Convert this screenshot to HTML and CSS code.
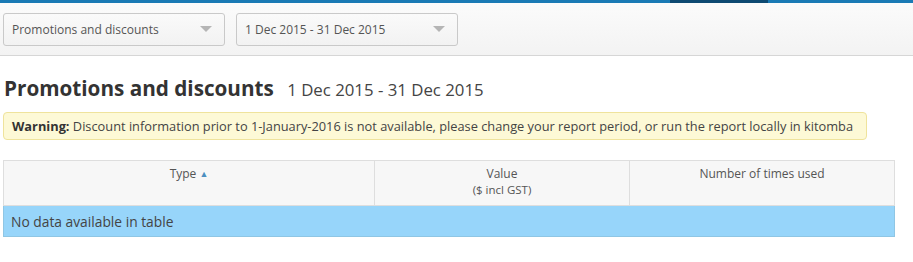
FILE: index.html
```html
<!DOCTYPE html>
<html lang="en">

<head>
    <meta charset="utf-8">
    <meta name="viewport" content="width=device-width, initial-scale=1.0">
    <title>Promotions and discounts</title>
    <link rel="stylesheet" href="styles.css">
</head>

<body>
    <div class="topbar">
        <span class="topbar-active"></span>
    </div>
    <div class="toolbar">
        <div class="select">
            <span>Promotions and discounts</span>
            <span class="caret"></span>
        </div>
        <div class="select">
            <span>1 Dec 2015 - 31 Dec 2015</span>
            <span class="caret"></span>
        </div>
    </div>

    <main>
        <h1>Promotions and discounts <small>1 Dec 2015 - 31 Dec 2015</small></h1>
        <div class="warning">
            <b>Warning:</b> Discount information prior to 1-January-2016 is not available, please change your report period, or run the report locally in kitomba
        </div>

        <table>
            <thead>
                <tr>
                    <th class="col-type">Type <span class="sort">&#9650;</span></th>
                    <th class="col-value">Value<br><span class="sub">($ incl GST)</span></th>
                    <th>Number of times used</th>
                </tr>
            </thead>
            <tbody>
                <tr class="empty">
                    <td colspan="3">No data available in table</td>
                </tr>
            </tbody>
        </table>
    </main>
</body></html>
```

FILE: styles.css
```css
body {
    margin: 0;
    font-family: "Open Sans", "Liberation Sans", sans-serif;
    color: #444;
    background: #fff;
}

.topbar {
    height: 3px;
    background: #1a7ab5;
    display: flex;
}

.topbar-active {
    width: 98px;
    margin-left: 670px;
    background: #0e4a72;
}

.toolbar {
    height: 53px;
    box-sizing: border-box;
    padding: 10px 3px 0;
    display: flex;
    gap: 11px;
    background: linear-gradient(#fbfbfb, #f3f3f3);
    border-bottom: 1px solid #d6d6d6;
}

.select {
    width: 222px;
    height: 33px;
    box-sizing: border-box;
    padding: 0 12px 0 8px;
    display: flex;
    align-items: center;
    justify-content: space-between;
    border: 1px solid #c9c9c9;
    border-radius: 3px;
    background: linear-gradient(#fafafa, #f2f2f2);
    font-size: 12px;
    color: #555;
}

.caret {
    width: 0;
    height: 0;
    border-left: 6px solid transparent;
    border-right: 6px solid transparent;
    border-top: 6px solid #b5b5b5;
    margin-top: -2px;
}

main {
    padding: 0 3px;
}

h1 {
    margin: 20px 0 0 1px;
    font-size: 20.7px;
    font-weight: 700;
    color: #333;
    line-height: 24px;
}

h1 small {
    margin-left: 8px;
    font-size: 16.8px;
    font-weight: 400;
    color: #444;
}

.warning {
    margin-top: 10px;
    width: 864px;
    height: 28px;
    box-sizing: border-box;
    padding: 0 8px;
    line-height: 26px;
    white-space: nowrap;
    background: #fdf9d6;
    border: 1px solid #efe39c;
    border-radius: 4px;
    font-size: 12.8px;
    color: #444;
}

.warning b {
    color: #333;
}

table {
    margin-top: 20px;
    width: 892px;
    border-collapse: collapse;
    font-size: 12px;
}

th {
    height: 45px;
    box-sizing: border-box;
    padding: 5px 8px 0;
    vertical-align: top;
    font-weight: 400;
    color: #555;
    line-height: 16px;
    background: #f7f7f7;
    border: 1px solid #dedede;
}

.col-type {
    width: 371px;
}

.col-value {
    width: 255px;
}

.sort {
    font-size: 9px;
    color: #4d8fc0;
    vertical-align: 1px;
}

.sub {
    font-size: 11.5px;
}

.empty td {
    height: 31px;
    box-sizing: border-box;
    padding: 0 7px;
    background: #97d5fa;
    border: 1px solid #8fc6e4;
    font-size: 13.8px;
    color: #444;
}
```
